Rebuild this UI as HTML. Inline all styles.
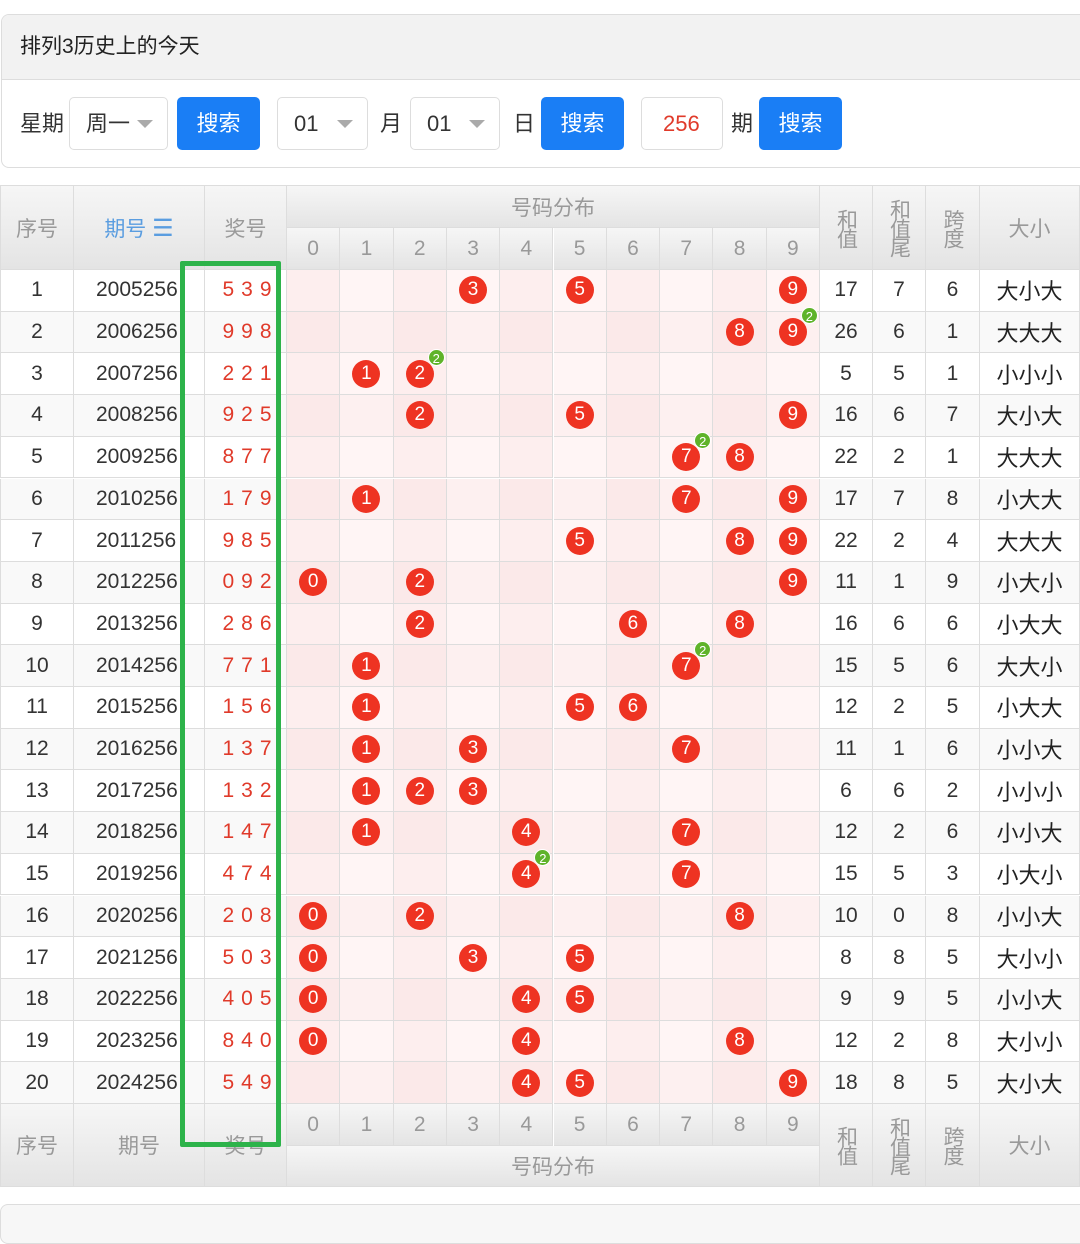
<!DOCTYPE html>
<html><head><meta charset="utf-8">
<style>
*{box-sizing:border-box;margin:0;padding:0}
body{width:1080px;height:1221px;background:#fff;font-family:"Liberation Sans","Noto Sans CJK SC",sans-serif;position:relative;overflow:hidden;color:#333}
.panel{position:absolute;left:1px;top:14px;width:1100px;height:154px;border:1px solid #ddd;border-radius:8px;overflow:hidden}
.ttl{height:65px;background:#f2f2f2;border-bottom:1px solid #ddd;font-size:21px;line-height:64px;padding-left:18px;color:#222}
.a{position:absolute}
.sel{position:absolute;top:83px;height:53px;border:1px solid #ddd;border-radius:5px;font-size:22px;line-height:51px;padding-left:16px;color:#333}
.sel:after{content:"";position:absolute;right:14px;top:22px;border-left:8px solid transparent;border-right:8px solid transparent;border-top:8px solid #aaa}
.btn{position:absolute;top:83px;height:53px;background:#1a7ef5;border-radius:5px;color:#fff;font-size:22px;line-height:53px;text-align:center}
.lbl{position:absolute;top:83px;line-height:53px;font-size:22px;color:#333}
.c{position:absolute;display:flex;align-items:center;justify-content:center;border-right:1px solid #ddd;border-bottom:1px solid #ddd;font-size:21px}
.h{background:linear-gradient(#f6f6f6,#e4e4e4);color:#999}
.ball{width:28px;height:28px;border-radius:50%;background:#ee3322;color:#fff;font-size:19px;display:flex;align-items:center;justify-content:center;position:relative}
.bd{position:absolute;right:-11px;top:-11px;width:17px;height:17px;border-radius:50%;background:#5fb32a;color:#fff;font-size:13px;line-height:17px;text-align:center;border:1px solid #fff}
.v{writing-mode:vertical-rl;letter-spacing:-2px;line-height:1}
</style></head><body>
<div class="panel"><div class="ttl">排列3历史上的今天</div></div>
<div class="lbl" style="left:20px;top:97px">星期</div>
<div class="sel" style="left:69px;top:97px;width:99px">周一</div>
<div class="btn" style="left:177px;top:97px;width:83px">搜索</div>
<div class="sel" style="left:277px;top:97px;width:91px">01</div>
<div class="lbl" style="left:380px;top:97px">月</div>
<div class="sel" style="left:410px;top:97px;width:90px">01</div>
<div class="lbl" style="left:513px;top:97px">日</div>
<div class="btn" style="left:541px;top:97px;width:83px">搜索</div>
<div class="sel" style="left:641px;top:97px;width:82px;color:#e03a2a;padding-left:21px">256</div>
<style>.sel[style*="641"]:after{display:none}</style>
<div class="lbl" style="left:731px;top:97px">期</div>
<div class="btn" style="left:759px;top:97px;width:83px">搜索</div>
<div id="t"></div>
<div class="a" style="left:180px;top:261px;width:101px;height:886px;border:5px solid #2db34a;border-radius:2px;z-index:5"></div>
<div class="a" style="left:0;top:1204px;width:1100px;height:40px;border:1px solid #ddd;border-radius:8px;background:#f7f7f7"></div>
<script>
var X=[0,74,205,287],dw=53.3;for(var i=1;i<=10;i++)X.push(287+dw*i);X[13]=820;X.push(873,926,980,1080);
var T=document.getElementById('t'),H='';
function cell(x1,x2,y,h,cls,html,st){H+='<div class="c '+cls+'" style="left:'+x1+'px;top:'+y+'px;width:'+(x2-x1)+'px;height:'+h+'px;'+(st||'')+'">'+html+'</div>';}
var R=[["2005256","539",17,7,6,"大小大"],["2006256","998",26,6,1,"大大大"],["2007256","221",5,5,1,"小小小"],["2008256","925",16,6,7,"大小大"],["2009256","877",22,2,1,"大大大"],["2010256","179",17,7,8,"小大大"],["2011256","985",22,2,4,"大大大"],["2012256","092",11,1,9,"小大小"],["2013256","286",16,6,6,"小大大"],["2014256","771",15,5,6,"大大小"],["2015256","156",12,2,5,"小大大"],["2016256","137",11,1,6,"小小大"],["2017256","132",6,6,2,"小小小"],["2018256","147",12,2,6,"小小大"],["2019256","474",15,5,3,"小大小"],["2020256","208",10,0,8,"小小大"],["2021256","503",8,8,5,"大小小"],["2022256","405",9,9,5,"小小大"],["2023256","840",12,2,8,"大小小"],["2024256","549",18,8,5,"大小大"]];
var top0=185;
cell(0,74,top0,85,'h','序号','border-top:1px solid #ddd;border-left:1px solid #ddd');
cell(74,205,top0,85,'h','<span style="color:#5a9de0">期号 <span style="font-size:24px">☰</span></span>','border-top:1px solid #ddd');
cell(205,287,top0,85,'h','奖号','border-top:1px solid #ddd');
cell(287,820,top0,43,'h','号码分布','border-top:1px solid #ddd');
for(var i=0;i<10;i++)cell(X[3+i],X[4+i],228,42,'h',i);
var hh=['和值','和值尾','跨度'];
for(var i=0;i<3;i++)cell(X[13+i],X[14+i],top0,85,'h','<span class="v">'+hh[i]+'</span>','border-top:1px solid #ddd');
cell(980,1080,top0,85,'h','大小','border-top:1px solid #ddd');
var rh=41.7,badge={"1_9":1,"2_2":1,"4_7":1,"9_7":1,"14_4":1};
R.forEach(function(r,k){var y=270+rh*k,bg=k%2?'#f9f9f9':'#fff';
cell(0,74,y,rh,'',k+1,'background:'+bg+';border-left:1px solid #ddd');
cell(74,205,y,rh,'',r[0],'background:'+bg+';justify-content:flex-start;padding-left:22px;overflow:hidden');
cell(205,287,y,rh,'','<span style="color:#e03a2a;letter-spacing:7px;margin-left:10px">'+r[1]+'</span>','background:'+bg);
for(var d=0;d<10;d++){var pb=(d%2?'#fff5f5':'#fdeeee');if(k%2)pb=(d%2?'#fdf0f0':'#fbe9e9');var s='';
if(r[1].indexOf(''+d)>=0)s='<div class="ball">'+d+(badge[k+'_'+d]?'<div class="bd">2</div>':'')+'</div>';
cell(X[3+d],X[4+d],y,rh,'',s,'background:'+pb);}
cell(820,873,y,rh,'',r[2],'background:'+bg);cell(873,926,y,rh,'',r[3],'background:'+bg);cell(926,980,y,rh,'',r[4],'background:'+bg);
cell(980,1080,y,rh,'',r[5],'background:'+bg+';font-size:22px;color:#222');});
var fy=1104;
cell(0,74,fy,83,'h','序号','border-left:1px solid #ddd');cell(74,205,fy,83,'h','期号');cell(205,287,fy,83,'h','奖号');
for(var i=0;i<10;i++)cell(X[3+i],X[4+i],fy,42,'h',i);
cell(287,820,1146,41,'h','号码分布');
for(var i=0;i<3;i++)cell(X[13+i],X[14+i],fy,83,'h','<span class="v">'+hh[i]+'</span>');
cell(980,1080,fy,83,'h','大小');
T.innerHTML=H;
</script>
</body></html>
